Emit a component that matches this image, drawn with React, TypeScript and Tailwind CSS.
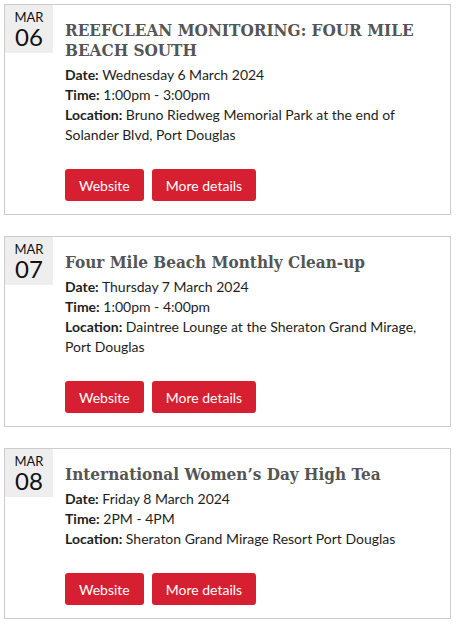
type EventItem = {
  month: string;
  day: string;
  title: string;
  date: string;
  time: string;
  location: string;
};

const events: EventItem[] = [
  {
    month: "MAR",
    day: "06",
    title: "REEFCLEAN MONITORING: FOUR MILE BEACH SOUTH",
    date: "Wednesday 6 March 2024",
    time: "1:00pm - 3:00pm",
    location: "Bruno Riedweg Memorial Park at the end of Solander Blvd, Port Douglas",
  },
  {
    month: "MAR",
    day: "07",
    title: "Four Mile Beach Monthly Clean-up",
    date: "Thursday 7 March 2024",
    time: "1:00pm - 4:00pm",
    location: "Daintree Lounge at the Sheraton Grand Mirage, Port Douglas",
  },
  {
    month: "MAR",
    day: "08",
    title: "International Women\u2019s Day High Tea",
    date: "Friday 8 March 2024",
    time: "2PM - 4PM",
    location: "Sheraton Grand Mirage Resort Port Douglas",
  },
];

export default function App() {
  return (
    <div className="min-h-[627px] bg-white pl-1 pt-1 font-['Lato','Liberation_Sans',sans-serif] text-[14px] text-[#1e1e1e]">
      <div className="flex w-[447px] flex-col gap-[21px]">
        {events.map((e) => (
          <EventCard key={e.day} event={e} />
        ))}
      </div>
    </div>
  );
}

function EventCard({ event }: { event: EventItem }) {
  return (
    <article className="flex border border-[#cccccc]">
      <div className="flex h-[48px] w-[48px] shrink-0 flex-col items-center bg-[#eeeeee] pt-[3.5px] text-[#111]">
        <span className="text-[13px] leading-[16px]">{event.month}</span>
        <span className="text-[24px] leading-[23px]">{event.day}</span>
      </div>
      <div className="min-w-0 flex-1 pb-[13px] pl-3 pr-5 pt-[15px]">
        <h2 className="font-['DejaVu_Serif','Liberation_Serif',serif] text-[17px] font-bold leading-[20px] text-[#555] font-stretch-condensed">
          {event.title}
        </h2>
        <div className="mt-[5px] leading-[20px]">
          <p>
            <span className="font-bold">Date:</span> {event.date}
          </p>
          <p>
            <span className="font-bold">Time:</span> {event.time}
          </p>
          <p>
            <span className="font-bold">Location:</span> {event.location}
          </p>
        </div>
        <div className="mt-[24px] flex gap-2">
          <a href="#" className="flex h-8 items-center rounded-[3px] bg-[#d61f30] px-[14px] text-white">
            Website
          </a>
          <a href="#" className="flex h-8 items-center rounded-[3px] bg-[#d61f30] px-[14px] text-white">
            More details
          </a>
        </div>
      </div>
    </article>
  );
}
